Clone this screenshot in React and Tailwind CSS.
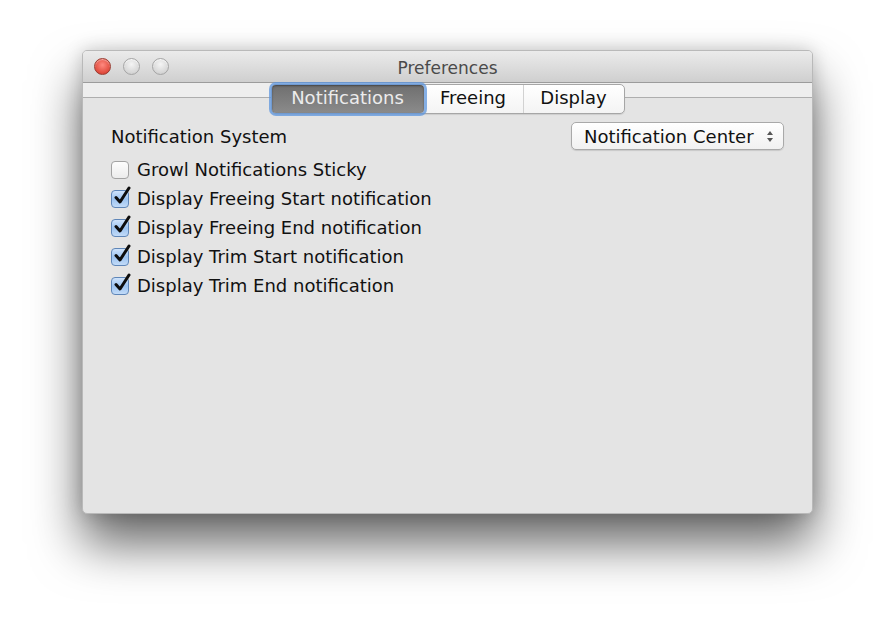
import { useState } from "react";

function TrafficLight({ red }) {
  return red ? (
    <div className="w-[17px] h-[17px] rounded-full border border-[#9a3b30] bg-[radial-gradient(circle_at_50%_40%,#ff8a80,#e04a3c_70%,#b83a2e)] shadow-[inset_0_1px_1px_rgba(255,255,255,0.5)]" />
  ) : (
    <div className="w-[17px] h-[17px] rounded-full border border-[#a5a5a5] bg-[radial-gradient(circle_at_50%_35%,#f4f4f4,#d8d8d8_65%,#c4c4c4)] shadow-[inset_0_1px_1px_rgba(255,255,255,0.8)]" />
  );
}

function Checkbox({ checked, label }) {
  return (
    <div className="flex items-center h-[29px]">
      <div className="relative w-[18px] h-[18px] shrink-0">
        {checked ? (
          <div className="w-full h-full rounded-[4px] border border-[#5f86b8] bg-gradient-to-b from-[#cfe3fb] via-[#9cc3f0] to-[#c2dbf8]" />
        ) : (
          <div className="w-full h-full rounded-[4px] border border-[#a3a3a3] bg-gradient-to-b from-[#fdfdfd] to-[#ececec]" />
        )}
        {checked && (
          <svg className="absolute left-[2px] -top-[4px]" width="18" height="20" viewBox="0 0 18 20">
            <path d="M3 11.5 L7 16 L16 2" fill="none" stroke="#0d0d0d" strokeWidth="3" strokeLinecap="round" strokeLinejoin="round" />
          </svg>
        )}
      </div>
      <span className="ml-[8px] text-[18px] text-[#111]">{label}</span>
    </div>
  );
}

export default function App() {
  const [tab, setTab] = useState("Notifications");
  const tabs = [
    { name: "Notifications", w: "w-[152px]" },
    { name: "Freeing", w: "w-[99px]" },
    { name: "Display", w: "w-[101px]" },
  ];
  const items = [
    { label: "Growl Notifications Sticky", checked: false },
    { label: "Display Freeing Start notification", checked: true },
    { label: "Display Freeing End notification", checked: true },
    { label: "Display Trim Start notification", checked: true },
    { label: "Display Trim End notification", checked: true },
  ];

  return (
    <div className="w-[894px] h-[628px] bg-white overflow-hidden pt-[50px] pl-[82px] font-['DejaVu_Sans',sans-serif]">
      <div className="w-[731px] h-[464px] rounded-[5px] bg-[#e4e4e4] flex flex-col overflow-hidden border border-[#b9b9b9] shadow-[0_30px_50px_rgba(0,0,0,0.6),0_0_18px_rgba(0,0,0,0.18)]">
        {/* title bar */}
        <div className="relative h-[32px] shrink-0 flex items-center pl-[11px] gap-[12px] bg-gradient-to-b from-[#ebebeb] to-[#cfcfcf] border-b border-[#9c9c9c]">
          <TrafficLight red />
          <TrafficLight />
          <TrafficLight />
          <div className="absolute inset-0 flex items-center justify-center text-[17px] text-[#4a4a4a] pt-[4px]">
            Preferences
          </div>
        </div>

        {/* toolbar strip with tabs */}
        <div className="relative shrink-0">
          <div className="h-[15px] bg-[#eeeeee] border-b border-[#aeaeae]" />
          <div className="absolute top-[1px] left-0 right-0 flex justify-center">
            <div className="flex h-[30px] rounded-[5px] bg-gradient-to-b from-white to-[#f4f4f4] border border-[#a6a6a6] shadow-[0_1px_1px_rgba(0,0,0,0.1)]">
              {tabs.map((t, i) => {
                const active = tab === t.name;
                return (
                  <button
                    key={t.name}
                    onClick={() => setTab(t.name)}
                    className={
                      active
                        ? `${t.w} h-full pb-[3px] flex items-center justify-center text-[18px] text-[#ececec] rounded-[4px] bg-gradient-to-b from-[#6f6f6f] to-[#8b8b8b] shadow-[0_0_0_3px_rgba(94,150,222,0.75),inset_0_1px_2px_rgba(0,0,0,0.4)] relative z-10`
                        : `${t.w} h-full pb-[3px] flex items-center justify-center text-[18px] text-[#111] ${i === 2 ? "border-l border-[#d2d2d2]" : ""}`
                    }
                  >
                    {t.name}
                  </button>
                );
              })}
            </div>
          </div>
        </div>

        {/* body */}
        <div className="flex-1 pl-[28px] pr-[28px] pt-[24px]">
          <div className="flex items-center justify-between">
            <span className="text-[18px] text-[#111]">Notification System</span>
            <div className="w-[213px] h-[28px] rounded-[5px] border border-[#a9a9a9] bg-gradient-to-b from-white to-[#f1f1f1] shadow-[0_1px_1px_rgba(0,0,0,0.12)] flex items-center pl-[12px] pr-[9px] justify-between">
              <span className="text-[18px] text-[#111]">Notification Center</span>
              <svg width="8" height="13" viewBox="0 0 8 13">
                <path d="M4 1 L7 5 L1 5 Z" fill="#555" />
                <path d="M4 12 L7 8 L1 8 Z" fill="#555" />
              </svg>
            </div>
          </div>
          <div className="mt-[5px]">
            {items.map((it) => (
              <Checkbox key={it.label} {...it} />
            ))}
          </div>
        </div>
      </div>
    </div>
  );
}
